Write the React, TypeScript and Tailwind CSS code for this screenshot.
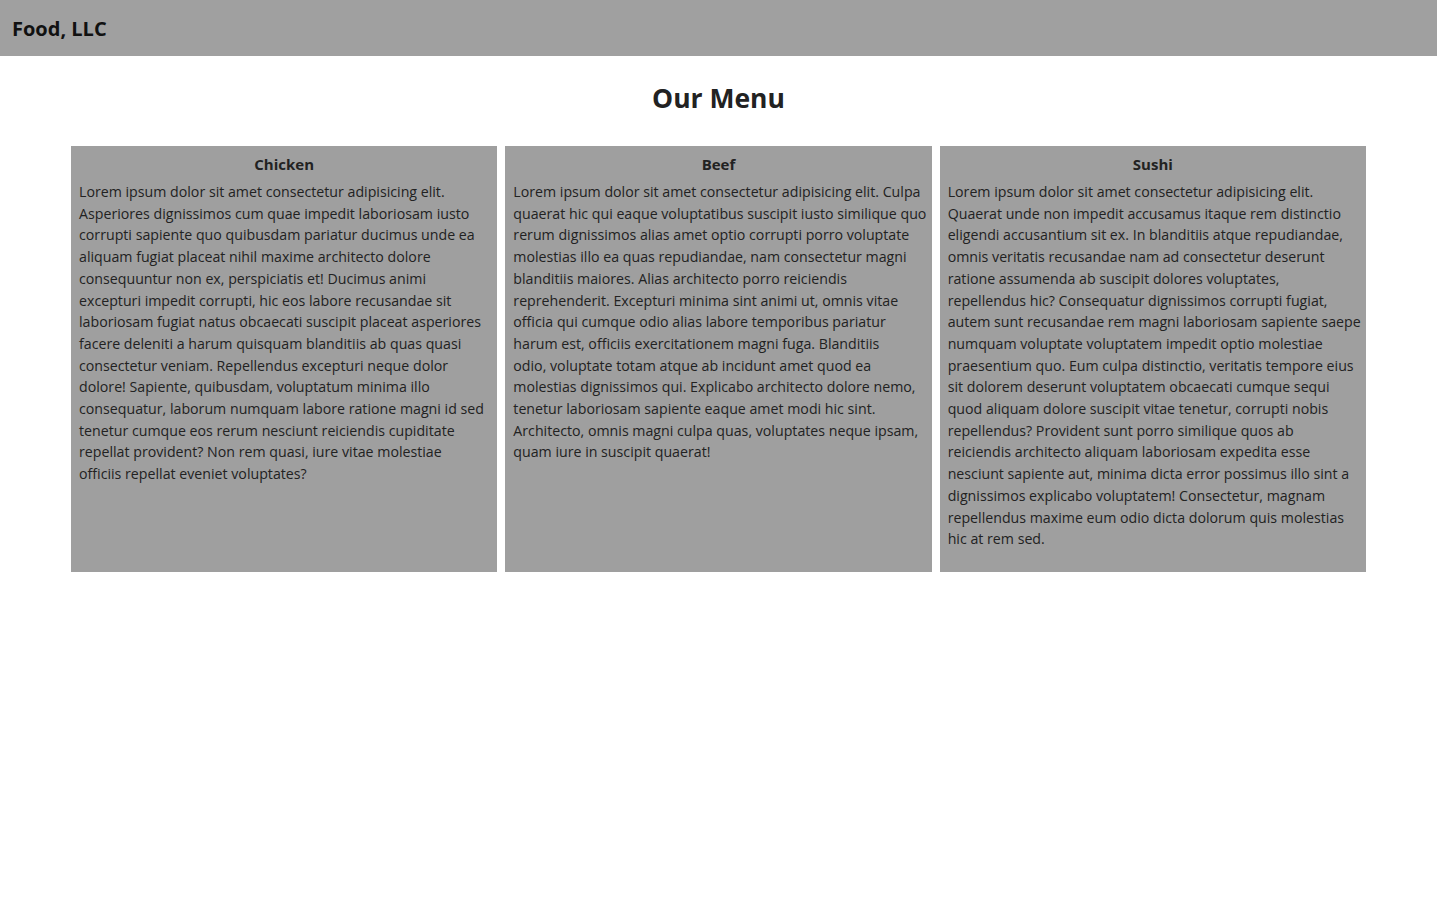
const items = [
  {
    name: "Chicken",
    lines: [
      "Lorem ipsum dolor sit amet consectetur adipisicing elit.",
      "Asperiores dignissimos cum quae impedit laboriosam iusto",
      "corrupti sapiente quo quibusdam pariatur ducimus unde ea",
      "aliquam fugiat placeat nihil maxime architecto dolore",
      "consequuntur non ex, perspiciatis et! Ducimus animi",
      "excepturi impedit corrupti, hic eos labore recusandae sit",
      "laboriosam fugiat natus obcaecati suscipit placeat asperiores",
      "facere deleniti a harum quisquam blanditiis ab quas quasi",
      "consectetur veniam. Repellendus excepturi neque dolor",
      "dolore! Sapiente, quibusdam, voluptatum minima illo",
      "consequatur, laborum numquam labore ratione magni id sed",
      "tenetur cumque eos rerum nesciunt reiciendis cupiditate",
      "repellat provident? Non rem quasi, iure vitae molestiae",
      "officiis repellat eveniet voluptates?",
    ],
  },
  {
    name: "Beef",
    lines: [
      "Lorem ipsum dolor sit amet consectetur adipisicing elit. Culpa",
      "quaerat hic qui eaque voluptatibus suscipit iusto similique quo",
      "rerum dignissimos alias amet optio corrupti porro voluptate",
      "molestias illo ea quas repudiandae, nam consectetur magni",
      "blanditiis maiores. Alias architecto porro reiciendis",
      "reprehenderit. Excepturi minima sint animi ut, omnis vitae",
      "officia qui cumque odio alias labore temporibus pariatur",
      "harum est, officiis exercitationem magni fuga. Blanditiis",
      "odio, voluptate totam atque ab incidunt amet quod ea",
      "molestias dignissimos qui. Explicabo architecto dolore nemo,",
      "tenetur laboriosam sapiente eaque amet modi hic sint.",
      "Architecto, omnis magni culpa quas, voluptates neque ipsam,",
      "quam iure in suscipit quaerat!",
    ],
  },
  {
    name: "Sushi",
    lines: [
      "Lorem ipsum dolor sit amet consectetur adipisicing elit.",
      "Quaerat unde non impedit accusamus itaque rem distinctio",
      "eligendi accusantium sit ex. In blanditiis atque repudiandae,",
      "omnis veritatis recusandae nam ad consectetur deserunt",
      "ratione assumenda ab suscipit dolores voluptates,",
      "repellendus hic? Consequatur dignissimos corrupti fugiat,",
      "autem sunt recusandae rem magni laboriosam sapiente saepe",
      "numquam voluptate voluptatem impedit optio molestiae",
      "praesentium quo. Eum culpa distinctio, veritatis tempore eius",
      "sit dolorem deserunt voluptatem obcaecati cumque sequi",
      "quod aliquam dolore suscipit vitae tenetur, corrupti nobis",
      "repellendus? Provident sunt porro similique quos ab",
      "reiciendis architecto aliquam laboriosam expedita esse",
      "nesciunt sapiente aut, minima dicta error possimus illo sint a",
      "dignissimos explicabo voluptatem! Consectetur, magnam",
      "repellendus maxime eum odio dicta dolorum quis molestias",
      "hic at rem sed.",
    ],
  },
];

export default function App() {
  return (
    <div className="min-h-screen bg-white text-[#222] font-['Open_Sans',sans-serif]">
      <header className="h-14 bg-[#a0a0a0] flex items-center px-3">
        <h1 className="text-[20px] font-bold text-[#111] translate-y-[1px]">Food, LLC</h1>
      </header>

      <h2 className="text-center text-[26.5px] font-bold mt-[22px] mb-[28px] leading-[40px]">Our Menu</h2>

      <section className="mx-auto w-[1295px] grid grid-cols-3 gap-2">
        {items.map((item) => (
          <div key={item.name} className="bg-[#9f9f9f] h-[426px] p-2">
            <h3 className="text-center text-[15px] font-bold leading-[20px] mt-0 mb-[7px]">{item.name}</h3>
            <p className="text-[14.2px] leading-[21.7px]">
              {item.lines.map((line, i) => (
                <span key={i} className="block whitespace-nowrap">
                  {line}
                </span>
              ))}
            </p>
          </div>
        ))}
      </section>
    </div>
  );
}
